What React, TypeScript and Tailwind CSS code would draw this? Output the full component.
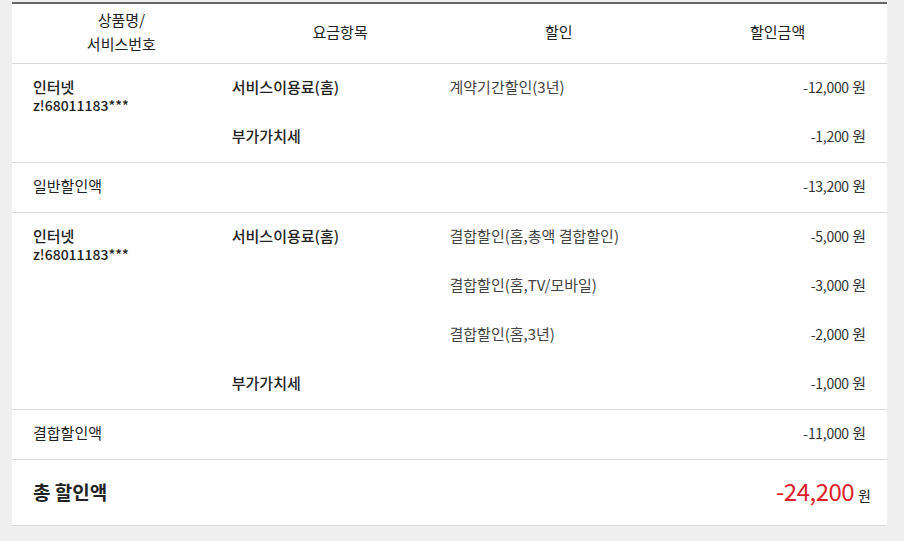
import React from "react";

type Sub = { item: string; discount: string; amount: string };
type Group = { product: string; serial: string; subs: Sub[] };

const font = { fontFamily: '"Noto Sans CJK KR", "Noto Sans", sans-serif' };

const g1: Group = {
  product: "인터넷",
  serial: "z!68011183***",
  subs: [
    { item: "서비스이용료(홈)", discount: "계약기간할인(3년)", amount: "-12,000" },
    { item: "부가가치세", discount: "", amount: "-1,200" },
  ],
};

const g2: Group = {
  product: "인터넷",
  serial: "z!68011183***",
  subs: [
    { item: "서비스이용료(홈)", discount: "결합할인(홈,총액 결합할인)", amount: "-5,000" },
    { item: "", discount: "결합할인(홈,TV/모바일)", amount: "-3,000" },
    { item: "", discount: "결합할인(홈,3년)", amount: "-2,000" },
    { item: "부가가치세", discount: "", amount: "-1,000" },
  ],
};

function Amount({ v }: { v: string }) {
  return (
    <span className="text-[#333]">
      <span className="text-[14px] tracking-[-0.3px]">{v}</span>
      <span className="text-[15px]"> 원</span>
    </span>
  );
}

function GroupRow({ g }: { g: Group }) {
  return (
    <div className="flex border-b border-[#d9d9d9]">
      <div className="w-1/4 pl-[21px] pt-[14px] text-[15px] leading-[18px] font-medium text-[#222]">
        <div>{g.product}</div>
        <div className="text-[14px]">{g.serial}</div>
      </div>
      <div className="w-3/4 flex flex-col">
        {g.subs.map((s, i) => (
          <div key={i} className="grid grid-cols-3 h-[49px] items-center text-[15px] pb-[2px]">
            <div className="pl-[1px] font-medium text-[#222]">{s.item}</div>
            <div className="text-[#444]">{s.discount}</div>
            <div className="text-right pr-[21px]">
              <Amount v={s.amount} />
            </div>
          </div>
        ))}
      </div>
    </div>
  );
}

function SumRow({ label, amount }: { label: string; amount: string }) {
  return (
    <div className="flex h-[50px] items-center border-b border-[#d9d9d9] text-[15px] pb-[2px]">
      <div className="w-1/4 pl-[21px] text-[#222]">{label}</div>
      <div className="w-3/4 text-right pr-[21px]">
        <Amount v={amount} />
      </div>
    </div>
  );
}

export default function App() {
  return (
    <div className="w-[904px] h-[541px] bg-[#efefef] pt-[2px] overflow-hidden" style={font}>
      <div className="ml-[12px] w-[875px] bg-white border-t-2 border-[#666] border-b border-b-[#dcdcdc]">
        <div className="grid grid-cols-4 h-[60px] items-center border-b border-[#d9d9d9] text-[15px] leading-[24px] text-[#222] text-center pb-[4px]">
          <div>
            상품명/
            <br />
            서비스번호
          </div>
          <div>요금항목</div>
          <div>할인</div>
          <div>할인금액</div>
        </div>
        <GroupRow g={g1} />
        <SumRow label="일반할인액" amount="-13,200" />
        <GroupRow g={g2} />
        <SumRow label="결합할인액" amount="-11,000" />
        <div className="flex h-[65px] items-center">
          <div className="w-1/2 pl-[21px] text-[19px] font-bold text-[#222]">총 할인액</div>
          <div className="w-1/2 flex items-baseline justify-end pr-[16px]">
            <span className="text-[24px] text-[#dd1f2c] leading-none tracking-[-0.5px]">-24,200</span>
            <span className="ml-[4px] text-[14px] text-[#222]">원</span>
          </div>
        </div>
      </div>
    </div>
  );
}
